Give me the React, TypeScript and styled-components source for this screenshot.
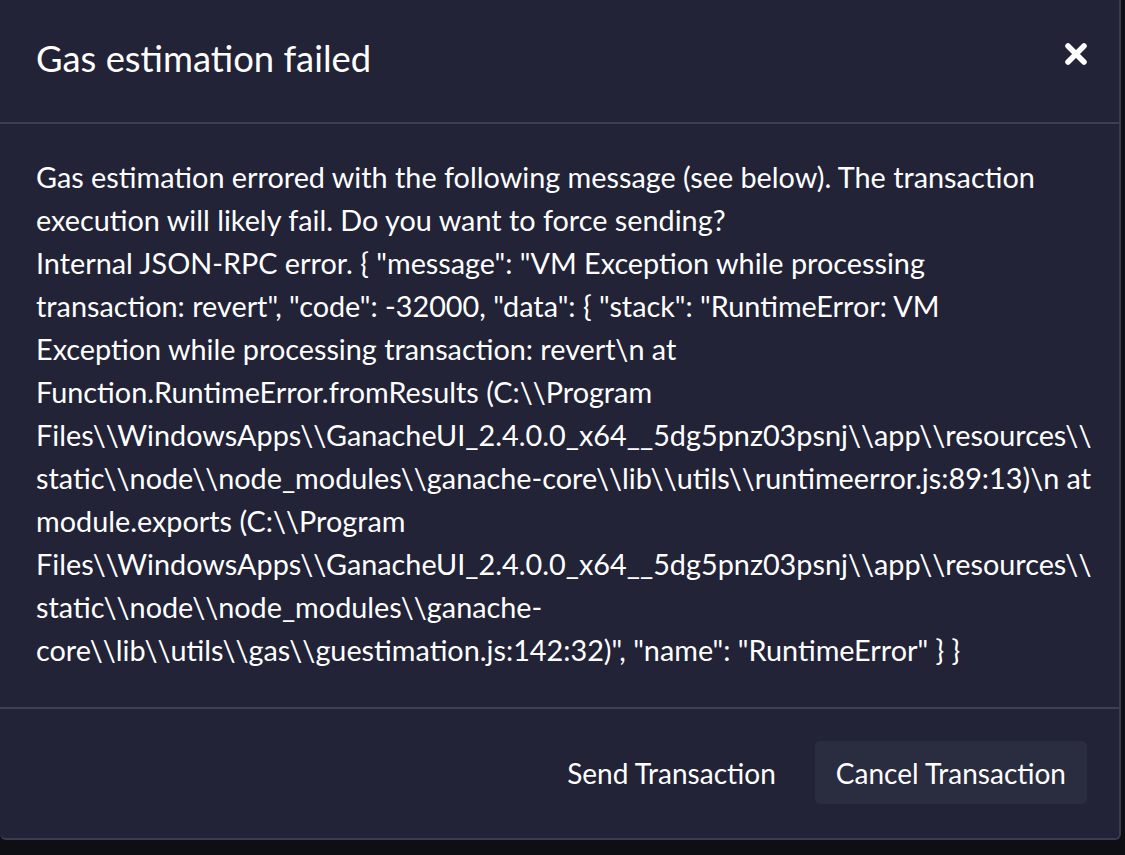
import React from "react";
import styled, { createGlobalStyle } from "styled-components";

const Global = createGlobalStyle`
  html, body { margin: 0; padding: 0; background: #0e0f15; }
  body { font-family: "Lato", "Noto Sans", sans-serif; }
`;

const Dialog = styled.div`
  width: 1121px;
  background: #222336;
  border-right: 2px solid #3a3c4f;
  border-bottom: 2px solid #3a3c4f;
  border-bottom-right-radius: 6px;
  border-bottom-left-radius: 6px;
  color: #ffffff;
  box-sizing: border-box;
`;

const Header = styled.div`
  height: 124px;
  box-sizing: border-box;
  padding: 37px 31px 0 36px;
  display: flex;
  justify-content: space-between;
  align-items: flex-start;
  border-bottom: 2px solid #3d3f52;
`;

const Title = styled.h5`
  margin: 0;
  font-size: 36.4px;
  font-weight: 400;
  line-height: 43px;
`;

const Close = styled.button`
  background: none;
  border: none;
  padding: 0;
  margin-top: 5px;
  width: 24px;
  height: 24px;
  cursor: pointer;
  display: flex;
`;

const Body = styled.div`
  padding: 32px 36px 35px 36px;
  font-size: 28.8px;
  line-height: 43px;
  border-bottom: 2px solid #3d3f52;
`;

const Line = styled.div`
  white-space: nowrap;
`;

const Footer = styled.div`
  height: 129px;
  box-sizing: border-box;
  display: flex;
  justify-content: flex-end;
  align-items: center;
  gap: 18px;
  padding: 0 32px 2px 0;
`;

const Button = styled.button<{ $filled?: boolean }>`
  font-family: inherit;
  font-size: 28px;
  color: #ffffff;
  height: 63px;
  padding: 0 21px;
  border: none;
  border-radius: 5px;
  background: ${(p) => (p.$filled ? "#2a2c3f" : "transparent")};
  cursor: pointer;
`;

const lines = [
  "Gas estimation errored with the following message (see below). The transaction",
  "execution will likely fail. Do you want to force sending?",
  'Internal JSON-RPC error. { "message": "VM Exception while processing',
  'transaction: revert", "code": -32000, "data": { "stack": "RuntimeError: VM',
  "Exception while processing transaction: revert\\n at",
  "Function.RuntimeError.fromResults (C:\\\\Program",
  "Files\\\\WindowsApps\\\\GanacheUI_2.4.0.0_x64__5dg5pnz03psnj\\\\app\\\\resources\\\\",
  "static\\\\node\\\\node_modules\\\\ganache-core\\\\lib\\\\utils\\\\runtimeerror.js:89:13)\\n at",
  "module.exports (C:\\\\Program",
  "Files\\\\WindowsApps\\\\GanacheUI_2.4.0.0_x64__5dg5pnz03psnj\\\\app\\\\resources\\\\",
  "static\\\\node\\\\node_modules\\\\ganache-",
  'core\\\\lib\\\\utils\\\\gas\\\\guestimation.js:142:32)", "name": "RuntimeError" } }',
];

export default function App() {
  return (
    <>
      <Global />
      <Dialog>
        <Header>
          <Title>Gas estimation failed</Title>
          <Close aria-label="Close">
            <svg width="24" height="24" viewBox="0 0 24 24">
              <path
                d="M4 4 L20 20 M20 4 L4 20"
                stroke="#ffffff"
                strokeWidth="5.5"
                strokeLinecap="round"
              />
            </svg>
          </Close>
        </Header>
        <Body>
          {lines.map((l, i) => (
            <Line key={i}>{l}</Line>
          ))}
        </Body>
        <Footer>
          <Button>Send Transaction</Button>
          <Button $filled>Cancel Transaction</Button>
        </Footer>
      </Dialog>
    </>
  );
}
